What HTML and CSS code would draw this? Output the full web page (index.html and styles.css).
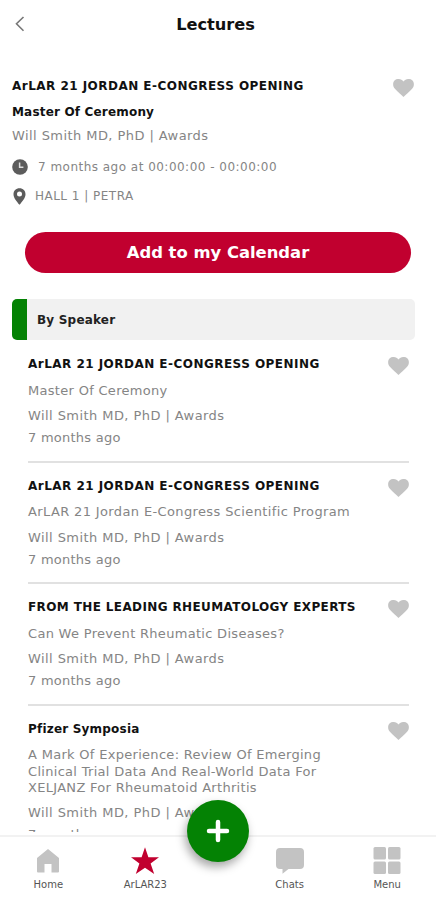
FILE: index.html
```html
<!DOCTYPE html>
<html lang="en">
<head>
    <meta charset="UTF-8">
    <meta name="viewport" content="width=device-width, initial-scale=1.0">
    <title>Lectures</title>
    <link rel="stylesheet" href="styles.css">
</head>
<body>
    <!-- Shared icons -->
    <svg class="icon-defs" width="0" height="0">
        <symbol id="heart" viewBox="0 0 21 18">
            <path d="M10.5 18 C8.5 15.8 4.5 12.8 1.9 9.8 C-0.5 7 -0.4 3.1 1.8 1.2 C4.3 -0.9 8.6 -0.2 10.5 2.6 C12.4 -0.2 16.7 -0.9 19.2 1.2 C21.4 3.1 21.5 7 19.1 9.8 C16.5 12.8 12.5 15.8 10.5 18 Z"/>
        </symbol>
    </svg>

    <div class="app">
        <header class="header">
            <button class="back-button" aria-label="Back">
                <svg width="10" height="16" viewBox="0 0 10 16"><path d="M8.5 1 L1.5 7.8 L8.5 14.8"/></svg>
            </button>
            <h1>Lectures</h1>
        </header>

        <main class="content">
            <section class="lecture">
                <svg class="heart"><use href="#heart"/></svg>
                <h2 class="title">ArLAR 21 JORDAN E-CONGRESS OPENING</h2>
                <h3 class="subtitle">Master Of Ceremony</h3>
                <p class="speaker">Will Smith MD, PhD | Awards</p>
                <div class="info time">
                    <svg width="16" height="16" viewBox="0 0 16 16">
                        <circle cx="8" cy="8" r="7.8"/>
                        <path class="hands" d="M7.6 3.6 V8.3 H11.4"/>
                    </svg>
                    <span>7 months ago at 00:00:00 - 00:00:00</span>
                </div>
                <div class="info place">
                    <svg width="13" height="17" viewBox="0 0 13 17">
                        <path fill-rule="evenodd" d="M6.5 0.3 C2.9 0.3 0.5 2.9 0.5 6.2 C0.5 9.9 3.8 13.6 6.5 16.8 C9.2 13.6 12.5 9.9 12.5 6.2 C12.5 2.9 10.1 0.3 6.5 0.3 Z M6.5 3.5 A2.5 2.5 0 1 1 6.5 8.5 A2.5 2.5 0 1 1 6.5 3.5 Z"/>
                    </svg>
                    <span>HALL 1 | PETRA</span>
                </div>
            </section>

            <button class="calendar-button">Add to my Calendar</button>

            <h2 class="section-header">By Speaker</h2>

            <div class="list">
                <article class="item">
                    <svg class="heart"><use href="#heart"/></svg>
                    <h3 class="title">ArLAR 21 JORDAN E-CONGRESS OPENING</h3>
                    <p class="topic">Master Of Ceremony</p>
                    <p class="speaker">Will Smith MD, PhD | Awards</p>
                    <p class="ago">7 months ago</p>
                </article>
                <article class="item">
                    <svg class="heart"><use href="#heart"/></svg>
                    <h3 class="title">ArLAR 21 JORDAN E-CONGRESS OPENING</h3>
                    <p class="topic program">ArLAR 21 Jordan E-Congress Scientific Program</p>
                    <p class="speaker">Will Smith MD, PhD | Awards</p>
                    <p class="ago">7 months ago</p>
                </article>
                <article class="item">
                    <svg class="heart"><use href="#heart"/></svg>
                    <h3 class="title experts">FROM THE LEADING RHEUMATOLOGY EXPERTS</h3>
                    <p class="topic">Can We Prevent Rheumatic Diseases?</p>
                    <p class="speaker">Will Smith MD, PhD | Awards</p>
                    <p class="ago">7 months ago</p>
                </article>
                <article class="item">
                    <svg class="heart"><use href="#heart"/></svg>
                    <h3 class="title symposia">Pfizer Symposia</h3>
                    <p class="topic">A Mark Of Experience: Review Of Emerging<br>Clinical Trial Data And Real-World Data For<br>XELJANZ For Rheumatoid Arthritis</p>
                    <p class="speaker">Will Smith MD, PhD | Awards</p>
                    <p class="ago">7 months ago</p>
                </article>
            </div>
        </main>

        <nav class="tabs">
            <a class="tab">
                <svg width="28" height="28" viewBox="0 0 28 28">
                    <path d="M14 2 L25 11 V24.5 Q25 25.5 24 25.5 H17.5 V17 H10.5 V25.5 H4 Q3 25.5 3 24.5 V11 Z"/>
                </svg>
                <span>Home</span>
            </a>
            <a class="tab active">
                <svg width="28" height="28" viewBox="0 0 28 28">
                    <path d="M14 0.2 L17.4 10.2 H28.2 L19.6 16.6 L23.2 27 L14 20.8 L4.8 27 L8.4 16.6 L-0.2 10.2 H10.6 Z"/>
                </svg>
                <span>ArLAR23</span>
            </a>
            <a class="tab spacer"></a>
            <a class="tab">
                <svg width="28" height="28" viewBox="0 0 28 28">
                    <path d="M4 1 H24 Q28 1 28 5 V18 Q28 22 24 22 H12.5 L6.5 26.8 V22 H4 Q0 22 0 18 V5 Q0 1 4 1 Z"/>
                </svg>
                <span>Chats</span>
            </a>
            <a class="tab">
                <svg width="28" height="28" viewBox="0 0 28 28">
                    <rect x="0.5" y="0" width="12.5" height="12.5" rx="1.5"/>
                    <rect x="15" y="0" width="12.5" height="12.5" rx="1.5"/>
                    <rect x="0.5" y="14.5" width="12.5" height="12.5" rx="1.5"/>
                    <rect x="15" y="14.5" width="12.5" height="12.5" rx="1.5"/>
                </svg>
                <span>Menu</span>
            </a>
            <button class="add-button" aria-label="Add">
                <svg width="24" height="24" viewBox="0 0 24 24"><path d="M12 3 V21 M3 12 H21"/></svg>
            </button>
        </nav>
    </div>
</body>
</html>
```
FILE: styles.css
```css
* {
    box-sizing: border-box;
}

body {
    margin: 0;
    font-family: Verdana, "DejaVu Sans", sans-serif;
    font-size: 13px;
    color: #858585;
    background: #fff;
}

h1, h2, h3, p {
    margin: 0;
}

button {
    font-family: inherit;
    border: 0;
    padding: 0;
    cursor: pointer;
}

.icon-defs {
    display: block;
}

.app {
    display: flex;
    flex-direction: column;
    height: 900px;
    overflow: hidden;
}

.header {
    display: grid;
    grid-template-columns: 40px 1fr 40px;
    align-items: center;
    height: 48px;
    padding-right: 5px;
}

.header h1 {
    text-align: center;
    font-size: 16.2px;
    color: #111;
}

.back-button {
    background: none;
    height: 18px;
    text-align: left;
    padding-left: 15px;
    line-height: 0;
}

.back-button path {
    fill: none;
    stroke: #777;
    stroke-width: 1.6;
}

.content {
    height: 784px;
    overflow: hidden;
}

.title {
    font-size: 12px;
    line-height: 16px;
    color: #111;
    letter-spacing: 0.47px;
}

.title.experts {
    letter-spacing: 0.38px;
}

.title.symposia {
    letter-spacing: 0.2px;
}

.heart {
    float: right;
    width: 21px;
    height: 18px;
    fill: #c3c3c3;
}

.lecture {
    height: 184px;
    padding: 30px 22px 0 12px;
}

.lecture .subtitle {
    font-size: 12px;
    line-height: 16px;
    margin-top: 10px;
    color: #111;
    letter-spacing: 0.18px;
}

.speaker {
    letter-spacing: 0.43px;
}

.lecture .speaker {
    line-height: 16px;
    margin-top: 8px;
}

.lecture .heart {
    margin-top: 1px;
}

.info {
    display: flex;
    align-items: center;
    height: 18px;
    font-size: 12px;
    letter-spacing: 0.48px;
}

.info svg {
    fill: #5c5c5c;
}

.time {
    margin-top: 14px;
    gap: 10px;
}

.place {
    margin-top: 11px;
    gap: 9px;
    padding-left: 1px;
}

.hands {
    fill: none;
    stroke: #ddd;
    stroke-width: 1.5;
}

.calendar-button {
    display: block;
    width: 386px;
    height: 41px;
    margin-left: 25px;
    border-radius: 21px;
    background: #c1002f;
    color: #fff;
    font-size: 16.4px;
    font-weight: bold;
}

.section-header {
    width: 403px;
    height: 41px;
    margin: 26px 0 1px 12px;
    padding-left: 10px;
    border-left: 15px solid #048204;
    border-radius: 5px;
    background: #f1f1f1;
    font-size: 12px;
    line-height: 42px;
    color: #222;
    letter-spacing: 0.2px;
}

.list {
    padding: 0 27px 0 28px;
}

.item {
    padding: 15px 0 14.5px;
    border-bottom: 2px solid #e1e1e1;
}

.item .heart {
    margin-top: 1px;
}

.topic {
    line-height: 16.4px;
    margin-top: 10.6px;
    letter-spacing: 0.3px;
}

.topic.program {
    letter-spacing: 0.37px;
}

.item .speaker {
    line-height: 16px;
    margin-top: 9px;
}

.ago {
    line-height: 16px;
    margin-top: 6px;
    letter-spacing: 0.25px;
}

.tabs {
    position: relative;
    display: flex;
    height: 65px;
    margin-top: 3px;
    padding-top: 10px;
    border-top: 2px solid #f2f2f2;
}

.tab {
    display: flex;
    flex-direction: column;
    align-items: center;
    width: 98px;
    font-size: 10px;
    line-height: 14px;
    color: #555;
}

.tab:first-child {
    width: 97px;
}

.tab.spacer {
    width: 47px;
}

.tab svg {
    fill: #c3c3c3;
    margin-bottom: 3px;
}

.tab.active svg {
    fill: #c1002f;
}

.add-button {
    position: absolute;
    left: 187px;
    top: -37px;
    width: 62px;
    height: 62px;
    border-radius: 50%;
    background: #048204;
    box-shadow: -2px 5px 10px rgba(0, 0, 0, 0.35);
    line-height: 0;
}

.add-button path {
    stroke: #fff;
    stroke-width: 4.5;
    stroke-linecap: round;
}
```
